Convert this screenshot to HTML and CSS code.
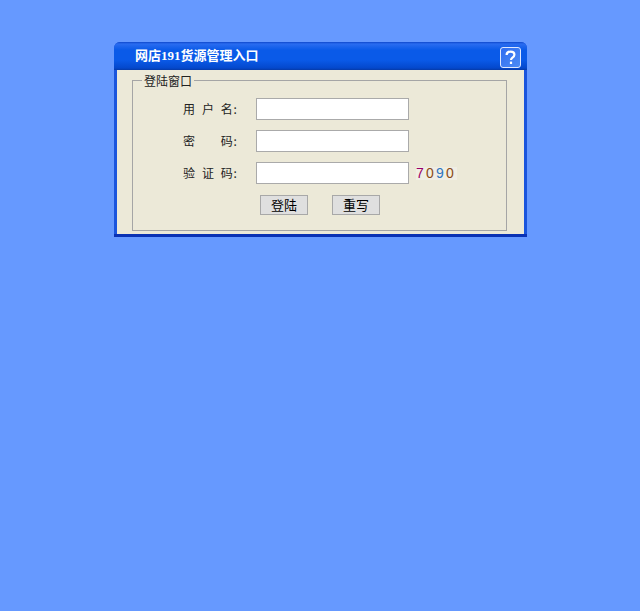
FILE: index.html
```html
<!DOCTYPE html>
<html lang="zh">
<head>
<meta charset="utf-8">
<title>网店191货源管理入口</title>
<link rel="stylesheet" href="styles.css">
</head>
<body>
<div class="window">
  <div class="titlebar">
    <span class="title">网店191货源管理入口</span>
    <span class="help">
      <svg width="19" height="19" viewBox="0 0 19 19"><path d="M5.600 7C5.600 4.500 7.300 3.600 9.500 3.600c2.300 0 3.900 1.200 3.900 3.100 0 1.500-.9 2.200-1.900 2.900-1 .7-1.500 1.300-1.500 2.500" fill="none" stroke="#fff" stroke-width="2.200"/><rect x="8.900" y="13.600" width="2.200" height="2.400" fill="#fff"/></svg>
    </span>
  </div>
  <div class="content">
    <fieldset class="panel">
      <legend class="legend">登陆窗口</legend>
      <form class="rows">
        <div class="row"><label class="label">用 户 名:</label><input class="field" type="text"></div>
        <div class="row"><label class="label">密　  码:</label><input class="field" type="password"></div>
        <div class="row"><label class="label">验 证 码:</label><input class="field" type="text">
          <span class="captcha"><span class="c1">7</span><span class="c2">0</span><span class="c3">9</span><span class="c2">0</span></span>
        </div>
        <div class="actions"><button class="btn" type="button">登陆</button><button class="btn" type="reset">重写</button></div>
      </form>
    </fieldset>
  </div>
</div>
</body>
</html>
```

FILE: styles.css
```css
html, body { margin: 0; padding: 0; }
body { background: #6699ff; min-height: 611px; padding-top: 42px; box-sizing: border-box; font-family: "Noto Sans CJK SC", "Liberation Sans", sans-serif; font-size: 12px; color: #222; }
.window { width: 413px; margin-left: 114px; box-sizing: border-box; background: #1a55dd; border-radius: 6px 6px 0 0; border-bottom: 3px solid #0a32b4; overflow: hidden; }
.titlebar { height: 28px; box-sizing: border-box; display: flex; align-items: center; justify-content: space-between; padding: 0 6px 0 21px; background: linear-gradient(#0f48cc 0, #2a6cf0 2px, #0a5ae8 8px, #0a5ae8 18px, #0448cc 26px, #063aa8 28px); }
.title { font-family: "Liberation Serif", "Noto Sans CJK SC", serif; font-weight: bold; font-size: 13px; color: #fff; margin-bottom: 3px; }
.help { width: 21px; height: 21px; box-sizing: border-box; margin-top: 2px; display: flex; align-items: center; justify-content: center; border: 1px solid #dfe8ff; border-radius: 3px; background: linear-gradient(135deg, #2f6cf0, #4d8cf5); }
.help svg { flex: none; }
.content { margin: 0 3px; background: #ece9d8; padding: 3px 17px 3px 15px; height: 164px; box-sizing: border-box; }
.panel { margin: 0; padding: 0; height: 158px; box-sizing: border-box; border: 1px solid #a5a5a5; }
.legend { margin-left: 9px; padding: 0 2px; line-height: 15px; font-size: 12px; color: #222; }
.rows { display: flex; flex-direction: column; padding-top: 10px; }
.row { display: flex; align-items: center; height: 22px; margin-bottom: 10px; }
.label { width: 123px; box-sizing: border-box; padding: 0 0 2px 50px; font-size: 12px; white-space: pre; word-spacing: 3px; letter-spacing: 0.6px; }
.field { width: 153px; height: 22px; box-sizing: border-box; border: 1px solid #aaa; background: #fff; padding: 0; margin: 0; outline: none; }
.captcha { margin-left: 7px; padding: 0 1px 0 0; background: #f0eee4; font-family: "Liberation Sans", sans-serif; font-size: 14px; line-height: 13px; letter-spacing: 2.200px; display: inline-block; }
.c1 { color: #990066; }
.c2 { color: #8b4a14; }
.c3 { color: #2e75c0; }
.actions { display: flex; gap: 24px; padding-left: 127px; margin-top: 1px; }
.btn { width: 48px; height: 20px; box-sizing: border-box; padding: 0; border: 1px solid #a8a8a8; background: #dfdfdf; font-family: "Noto Sans CJK SC", sans-serif; font-size: 13px; line-height: 16px; color: #000; }
```
